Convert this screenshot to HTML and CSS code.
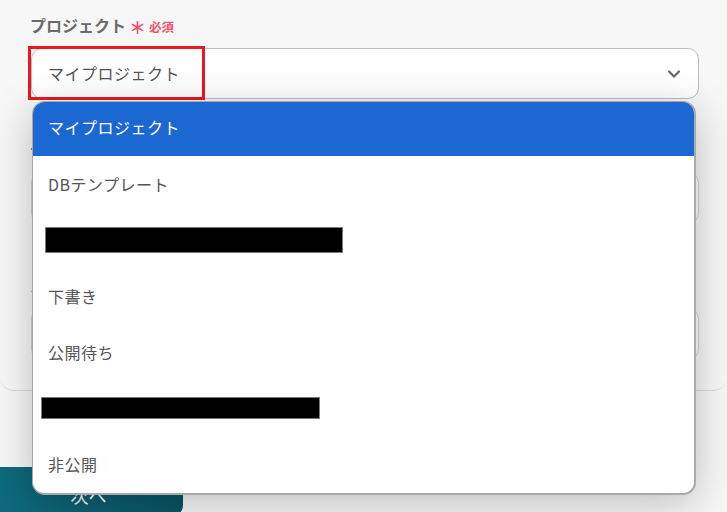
FILE: index.html
```html
<!DOCTYPE html>
<html lang="ja">
<head>
  <meta charset="UTF-8">
  <meta name="viewport" content="width=device-width, initial-scale=1.0">
  <title>プロジェクト選択</title>
  <link rel="stylesheet" href="styles.css">
</head>
<body>
  <div class="page">
    <div class="panel">
      <div class="field field-first">
        <div class="label">プロジェクト<span class="required"><span class="star">＊</span>必須</span></div>
        <div class="select">
          <span class="select-value">マイプロジェクト</span>
          <svg class="chevron" width="14" height="10" viewBox="0 0 14 10">
            <polyline points="2,2.5 7,7.5 12,2.5" fill="none" stroke="#666" stroke-width="2.2" stroke-linecap="round" stroke-linejoin="round"/>
          </svg>
        </div>
      </div>

      <div class="field field-second">
        <div class="label">データベース</div>
        <div class="input"></div>
      </div>

      <div class="field">
        <div class="label">ステータス</div>
        <div class="input"></div>
      </div>
    </div>

    <button class="next-button">次へ</button>

    <!-- highlight around the current value -->
    <div class="highlight"></div>

    <!-- open dropdown menu -->
    <ul class="menu">
      <li class="menu-item selected">マイプロジェクト</li>
      <li class="menu-item">DBテンプレート</li>
      <li class="menu-item"><span class="redact redact-a"></span></li>
      <li class="menu-item">下書き</li>
      <li class="menu-item">公開待ち</li>
      <li class="menu-item"><span class="redact redact-b"></span></li>
      <li class="menu-item">非公開</li>
    </ul>
  </div>
</body>
</html>
```

FILE: styles.css
```css
body {
  margin: 0;
  background-color: #f7f7f7;
  font-family: 'Noto Sans CJK JP', 'Noto Sans', sans-serif;
  color: #555;
  overflow: hidden;
}

.page {
  position: relative;
  width: 727px;
  height: 512px;
  overflow: hidden;
}

.panel {
  padding: 15px 28px 0 31px;
  height: 375px;
  border-bottom: 1px solid #dcdcdc;
  border-bottom-left-radius: 14px;
  border-bottom-right-radius: 14px;
}

.field {
  margin-bottom: 40px;
}

.field-second {
  margin-bottom: 51px;
}

.label {
  height: 20px;
  line-height: 20px;
  font-size: 16px;
  font-weight: bold;
  color: #6b6b6b;
  margin-left: -1px;
  margin-bottom: 13px;
}

.required {
  color: #f0506e;
  font-size: 12.5px;
  margin-left: 3px;
}

.star {
  font-size: 17px;
  font-weight: bold;
  margin-right: 3px;
  vertical-align: -2px;
}

.select {
  display: flex;
  align-items: center;
  justify-content: space-between;
  height: 49px;
  padding: 0 17px 0 16px;
  background-color: #fff;
  border: 1px solid #bdbdbd;
  border-radius: 11px;
}

.select-value {
  font-size: 16px;
  letter-spacing: 0.5px;
  color: #555;
  margin-top: -2px;
}

.input {
  height: 50px;
  background-color: #fff;
  border: 1px solid #d0d0d0;
  border-radius: 11px;
}

.next-button {
  display: block;
  margin: 76px 0 0 -20px;
  width: 203px;
  height: 50px;
  border: none;
  border-radius: 12px;
  background: linear-gradient(90deg, #0f6d80, #0a5466);
  color: #fff;
  font-family: inherit;
  font-size: 18px;
  padding-top: 6px;
  padding-left: 20px;
}

.highlight {
  position: absolute;
  left: 28px;
  top: 46px;
  width: 171px;
  height: 48px;
  border: 3px solid #e8191f;
}

.menu {
  position: absolute;
  left: 32px;
  top: 101px;
  width: 661px;
  height: 391px;
  margin: 0;
  padding: 0;
  list-style: none;
  background-color: #fff;
  border: 1px solid #a9a9a9;
  border-right-width: 2px;
  border-bottom-width: 2px;
  border-radius: 13px;
  overflow: hidden;
  box-shadow: 0 8px 40px rgba(0, 0, 0, 0.24);
}

.menu-item {
  display: flex;
  align-items: center;
  height: 56px;
  padding-left: 15px;
  font-size: 16px;
  letter-spacing: 0.5px;
  color: #555;
}

.menu-item.selected {
  height: 54px;
  padding-bottom: 5px;
  box-sizing: border-box;
  background-color: #1b68d3;
  color: #fff;
}

.redact {
  display: block;
  background-color: #000;
  border: 1px solid #777;
}

.redact-a {
  margin-left: -3px;
  width: 296px;
  height: 24px;
}

.redact-b {
  margin-left: -7px;
  width: 277px;
  height: 20px;
}
```
